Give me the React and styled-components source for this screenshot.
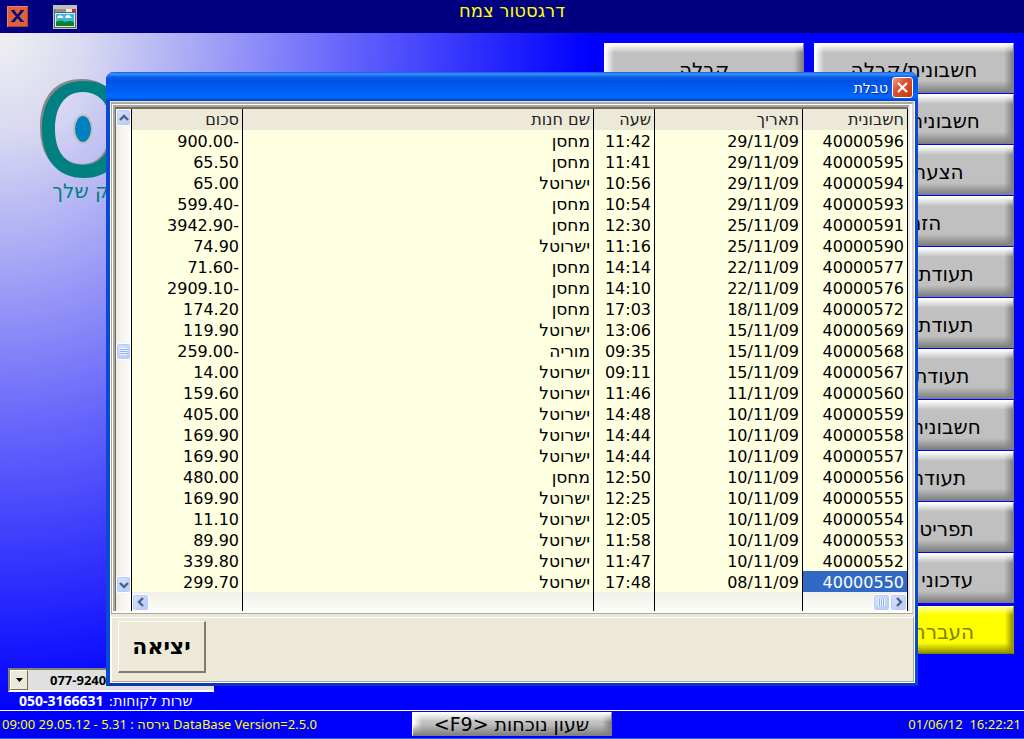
import React from 'react';
import styled, { createGlobalStyle, css } from 'styled-components';

const Global = createGlobalStyle`
  * { box-sizing: border-box; }
  html, body, #root { height: 100%; margin: 0; }
  body { background: #0000ff; }
  button, select, input { font-family: inherit; }
`;

const Desktop = styled.div`
  position: relative;
  min-height: 100%;
  display: flex;
  flex-direction: column;
  overflow: hidden;
  font-family: "DejaVu Sans", sans-serif;
  background: #0000ff;
`;

const TopBar = styled.header`
  display: grid;
  grid-template-columns: 1fr auto 1fr;
  height: 33px;
  background: #000080;
`;

const TopIcons = styled.div`
  display: flex;
  align-items: center;
  gap: 25px;
  padding-left: 7px;
`;

const IconButton = styled.button`
  display: block;
  padding: 0;
  border: 0;
  background: none;
  line-height: 0;
`;

const ShopName = styled.h1`
  margin: 0;
  font-size: 18px;
  font-weight: 400;
  line-height: 22px;
  color: #ffff00;
`;

const Main = styled.main`
  flex: 1;
  display: flex;
  justify-content: space-between;
  background: radial-gradient(ellipse 590px 680px at 0 0, #f0f0f0 0%, #d8d8f2 15%, #6666fb 58%, #0000ff 100%);
`;

const Side = styled.div`
  display: flex;
  flex-direction: column;
  justify-content: space-between;
  width: 260px;
  padding-top: 44px;
`;

const Brand = styled.div`
  padding-left: 38px;
`;

const Tagline = styled.p`
  margin: 0;
  width: 112px;
  font-size: 20px;
  line-height: 24px;
  color: #008080;
  white-space: nowrap;
`;

const Support = styled.div`
  display: flex;
  flex-direction: column;
  padding-left: 8px;
`;

const PhoneBox = styled.label`
  display: flex;
  width: 206px;
  height: 24px;
  border: solid;
  border-width: 2px 0 2px 2px;
  border-color: #808070 #fff #fff #808070;
  background: #e0e0e0;
`;

const PhoneSelect = styled.select`
  flex: 1;
  appearance: none;
  border: 0;
  padding: 0 0 0 22px;
  font-family: "Noto Sans", sans-serif;
  font-size: 13px;
  font-weight: 700;
  color: #000;
  background: #e0e0e0;
`;

const DropArrow = styled.span`
  display: grid;
  place-items: center;
  width: 18px;
  border: 1px solid;
  border-color: #fff #716f64 #716f64 #fff;
  background: #ece9d8;
`;

const Service = styled.p`
  display: flex;
  align-items: center;
  gap: 5px;
  height: 18px;
  margin: 0;
  padding-left: 11px;
  font-size: 14px;
  line-height: 18px;
  color: #fff;
  b { font-family: "Noto Sans", sans-serif; }
`;

const Menu = styled.nav`
  display: grid;
  grid-template-columns: 200px 200px;
  column-gap: 10px;
  row-gap: 1px;
  align-content: start;
  padding: 10px 10px 0 0;
`;

const bevel = css`
  border: 1px solid;
  border-color: #fff #808080 #808080 #fff;
  background:
    linear-gradient(to bottom, #ffffff 0, #c0c0c000 9px),
    linear-gradient(to top, #808080 0, #c0c0c000 11px),
    linear-gradient(to left, #808080 0, #c0c0c000 9px),
    linear-gradient(to right, #ffffff 0, #c0c0c000 9px),
    #c0c0c0;
`;

const MenuButton = styled.button`
  height: 50px;
  grid-column: ${(p) => p.$col || 2};
  padding: 3px 0 0;
  font-size: 20px;
  line-height: 24px;
  font-family: "DejaVu Sans", sans-serif;
  color: #000;
  white-space: nowrap;
  ${bevel}
  ${(p) => p.$hot && css`
    height: 48px;
    margin-top: 2px;
    color: #808000;
    border-color: #ffff90 #a0a000 #808000 #ffff90;
    background:
      linear-gradient(to bottom, #ffff90 0, #ffff0000 8px),
      linear-gradient(to top, #909000 0, #ffff0000 10px),
      linear-gradient(to left, #909000 0, #ffff0000 8px),
      #ffff00;
  `}
`;

const StatusBar = styled.footer`
  display: grid;
  grid-template-columns: 1fr auto 1fr;
  align-items: center;
  height: 29px;
  padding: 1px 3px 2px 2px;
  border-top: 1px solid #fff;
  border-bottom: 1px solid #2060d8;
  font-family: "Noto Sans", "DejaVu Sans", sans-serif;
  font-size: 13px;
  line-height: 18px;
  color: #ffff00;
`;

const Clock = styled.span`
  text-align: right;
`;

const ClockButton = styled.button`
  width: 200px;
  height: 24px;
  padding: 0;
  font-size: 19px;
  line-height: 22px;
  font-family: "DejaVu Sans", sans-serif;
  color: #000;
  ${bevel}
`;

const Dialog = styled.section`
  position: absolute;
  top: 72px;
  left: 106px;
  right: 106px;
  border: solid #0a48d8;
  border-width: 0 3px 3px 4px;
  border-bottom-color: #0838b8;
  border-radius: 8px 8px 0 0;
  background: #ece9d8;
  box-shadow: inset 0 0 0 1px #fff;
`;

const TitleBar = styled.div`
  display: flex;
  align-items: center;
  justify-content: flex-end;
  gap: 4px;
  height: 29px;
  margin: 0 -3px 0 -4px;
  padding: 2px 5px 0;
  border-radius: 8px 8px 0 0;
  background: linear-gradient(#0a5ce0 0, #3c94ff 2px, #0a5ce8 5px, #0053e0 9px, #0060f8 20px, #006aff 25px, #0040c8 29px);
`;

const Title = styled.h2`
  margin: 0;
  font-size: 14px;
  font-weight: 400;
  line-height: 20px;
  color: #fff;
  text-shadow: 1px 1px #0a2890;
`;

const CloseButton = styled.button`
  display: grid;
  place-items: center;
  width: 21px;
  height: 21px;
  padding: 0;
  border: 1px solid #fff;
  border-radius: 3px;
  background: linear-gradient(135deg, #f0a088, #e05030 40%, #c83808);
`;

const GridFrame = styled.div`
  display: flex;
  margin: 1px 1px 0;
  padding: 1px 2px 2px 1px;
  border: solid;
  border-width: 2px 2px 1px 1px;
  border-color: #aca899 #d8d4c4 #aca899 #aca899;
  background: #fff;
`;

const GridInner = styled.div`
  display: flex;
  flex: 1;
  min-width: 0;
  border: solid #aca899;
  border-width: 2px 0 0 2px;
  border-right: 2px solid #ece9d8;
`;

const VScroll = styled.div`
  display: flex;
  flex-direction: column;
  width: 16px;
  padding-bottom: 18px;
  border-left: 1px solid #716f64;
  border-top: 2px solid #716f64;
  background: linear-gradient(to right, #eeede5, #fefefb);
`;

const Gap = styled.span`
  flex: 1;
`;

const ScrollButton = styled.button`
  display: grid;
  place-items: center;
  flex: none;
  width: ${(p) => (p.$narrow ? 15 : 17)}px;
  height: 17px;
  padding: 0;
  border: 1px solid #fff;
  border-radius: 3px;
  background: linear-gradient(135deg, #d8e4fe, #b4c8f6);
  box-shadow: inset 0 0 0 1px #b8ccf8;
`;

const Sheet = styled.div`
  flex: 1;
  min-width: 0;
  border-top: 2px solid #716f64;
`;

const Table = styled.table`
  width: 100%;
  table-layout: fixed;
  border-collapse: separate;
  border-spacing: 0;
  border-right: 1px solid #000;
  direction: rtl;
  font-size: 16px;
  line-height: 19px;
`;

const Col = styled.col`
  width: ${(p) => (p.$w ? `${p.$w}px` : 'auto')};
`;

const Th = styled.th`
  height: 21px;
  padding: 0 3px 0 0;
  border-left: 1px solid #000;
  background: #ece9d8;
  font-size: 16px;
  font-weight: 400;
  text-align: right;
  color: #222;
`;

const Td = styled.td`
  height: 21px;
  padding: 2px 3px 0 0;
  border-left: 1px solid #000;
  background: ${(p) => (p.$selected ? '#316ac5' : '#ffffe1')};
  color: ${(p) => (p.$selected ? '#fff' : '#000')};
  font-size: ${(p) => (p.$name ? 17 : 16)}px;
  text-align: right;
  white-space: nowrap;
`;

const Ltr = styled.bdo`
  unicode-bidi: isolate;
`;

const TrackCell = styled.td`
  height: 19px;
  padding: 1px 0 0;
  border-left: 1px solid #000;
  background: linear-gradient(#f0efe8, #fdfdfa);
`;

const TrackEnd = styled.div`
  display: flex;
  direction: ltr;
  justify-content: ${(p) => p.$side};
`;

const Actions = styled.div`
  height: 65px;
  margin: 3px 1px 1px;
  padding: 3px 6px;
  border: 1px solid;
  border-color: #fff #aca899 #aca899 #fff;
`;

const ExitButton = styled.button`
  width: 88px;
  height: 52px;
  padding: 0;
  border: solid;
  border-width: 1px 2px 2px 1px;
  border-color: #fff #807d70 #807d70 #fff;
  background: #ece9d8;
  font-family: "DejaVu Sans", sans-serif;
  font-size: 22px;
  font-weight: 700;
  color: #000;
`;

const Chevron = ({ turn }) => (
  <svg width="10" height="10" viewBox="0 0 10 10" aria-hidden="true">
    <path d="M1 7 L5 3 L9 7" fill="none" stroke="#4d6185" strokeWidth="2.4" transform={`rotate(${turn} 5 5)`} />
  </svg>
);

const Grip = ({ turn }) => (
  <svg width="9" height="9" viewBox="0 0 9 9" aria-hidden="true">
    <g transform={`rotate(${turn} 4.5 4.5)`}>
      <path d="M1 1.500H8M1 3.500H8M1 5.500H8M1 7.500H8" stroke="#f2f6ff" />
      <path d="M1 2.500H8M1 4.500H8M1 6.500H8" stroke="#8cb0f8" />
    </g>
  </svg>
);

const rows = [
  ['40000596', '29/11/09', '11:42', 'מחסן', '900.00-'],
  ['40000595', '29/11/09', '11:41', 'מחסן', '65.50'],
  ['40000594', '29/11/09', '10:56', 'ישרוטל', '65.00'],
  ['40000593', '29/11/09', '10:54', 'מחסן', '599.40-'],
  ['40000591', '25/11/09', '12:30', 'מחסן', '3942.90-'],
  ['40000590', '25/11/09', '11:16', 'ישרוטל', '74.90'],
  ['40000577', '22/11/09', '14:14', 'מחסן', '71.60-'],
  ['40000576', '22/11/09', '14:10', 'מחסן', '2909.10-'],
  ['40000572', '18/11/09', '17:03', 'מחסן', '174.20'],
  ['40000569', '15/11/09', '13:06', 'ישרוטל', '119.90'],
  ['40000568', '15/11/09', '09:35', 'מוריה', '259.00-'],
  ['40000567', '15/11/09', '09:11', 'ישרוטל', '14.00'],
  ['40000560', '11/11/09', '11:46', 'ישרוטל', '159.60'],
  ['40000559', '10/11/09', '14:48', 'ישרוטל', '405.00'],
  ['40000558', '10/11/09', '14:44', 'ישרוטל', '169.90'],
  ['40000557', '10/11/09', '14:44', 'ישרוטל', '169.90'],
  ['40000556', '10/11/09', '12:50', 'מחסן', '480.00'],
  ['40000555', '10/11/09', '12:25', 'ישרוטל', '169.90'],
  ['40000554', '10/11/09', '12:05', 'ישרוטל', '11.10'],
  ['40000553', '10/11/09', '11:58', 'ישרוטל', '89.90'],
  ['40000552', '10/11/09', '11:47', 'ישרוטל', '339.80'],
  ['40000550', '08/11/09', '17:48', 'ישרוטל', '299.70'],
];

const menu = [
  'חשבונית מרכזת',
  'הצעת מחיר',
  'הזמנה',
  'תעודת משלוח',
  'תעודת החזרה',
  'תעודת כניסה',
  'חשבונית החזרה',
  'תעודת מלאי',
  'תפריט הנהלה',
  'עדכוני מחירים',
];

export default function App() {
  return (
    <Desktop>
      <Global />
      <TopBar>
        <TopIcons>
          <IconButton aria-label="סגור">
            <svg width="21" height="21" viewBox="0 0 21 21">
              <rect width="21" height="21" fill="#e0603c" />
              <path d="M0 0H21V1H1V21H0Z" fill="#f08060" />
              <path d="M20 1V20H1V21H21V1Z" fill="#b84028" />
              <path d="M4 4.500H8M13 4.500H17M4 15.500H8M13 15.500H17" stroke="#000080" />
              <path d="M5.500 4.500L15 15.500M15.500 4.500L6 15.500" fill="none" stroke="#000080" strokeWidth="2.6" />
            </svg>
          </IconButton>
          <IconButton aria-label="תמונה">
            <svg width="24" height="24" viewBox="0 0 24 24">
              <rect width="24" height="24" fill="#c0c0c0" />
              <rect x="1" y="4" width="22" height="19" fill="#606060" />
              <rect x="2" y="4" width="20" height="3" fill="#909090" />
              <rect x="13" y="4" width="6" height="3" fill="#f0f0f0" />
              <rect x="19" y="4" width="3" height="3" fill="#e02020" />
              <rect x="2" y="8" width="20" height="14" fill="#e8e8e8" />
              <rect x="3" y="9" width="18" height="12" fill="#38b8e8" />
              <path d="M4 13Q6 9 9 11Q11 12 10 13ZM12 12Q15 8 17 11L19 13H13Z" fill="#fff" />
              <path d="M3 17Q8 14 12 17Q17 15 21 17V21H3Z" fill="#108020" />
            </svg>
          </IconButton>
        </TopIcons>
        <ShopName dir="rtl">דרגסטור צמח</ShopName>
      </TopBar>

      <Main>
        <Side>
          <Brand>
            <svg width="90" height="102" viewBox="0 0 90 102" display="block" aria-hidden="true">
              <path fillRule="evenodd" fill="#888888" d="M44 2C71 2 84 22 84 50S71 98 44 98S2 80 2 50S17 2 44 2ZM44 13C25 13 16 29 16 50S25 87 44 87S72 71 72 50S63 13 44 13Z" />
              <path fillRule="evenodd" fill="#008080" d="M46 4C73 4 86 22 86 52S73 101 46 101S4 82 4 52S19 4 46 4ZM45 15C26 15 17 31 17 52S26 88 45 88S74 72 74 52S64 15 45 15Z" />
              <ellipse cx="45" cy="52" rx="9" ry="14" fill="#0080c0" stroke="#c0c0c0" strokeWidth="2" />
            </svg>
            <Tagline dir="rtl">המשק שלך</Tagline>
          </Brand>
          <Support>
            <PhoneBox>
              <DropArrow>
                <svg width="7" height="4" viewBox="0 0 7 4" aria-hidden="true"><path d="M0 0H7L3.500 4Z" fill="#000" /></svg>
              </DropArrow>
              <PhoneSelect aria-label="טלפון"><option>077-9240000</option></PhoneSelect>
            </PhoneBox>
            <Service><b>050-3166631</b><span dir="rtl">שרות לקוחות:</span></Service>
          </Support>
        </Side>
        <Menu>
          <MenuButton $col={1}>קבלה</MenuButton>
          <MenuButton>חשבונית/קבלה</MenuButton>
          {menu.map((m) => <MenuButton key={m}>{m}</MenuButton>)}
          <MenuButton $hot>העברת נתונים</MenuButton>
        </Menu>
      </Main>

      <StatusBar>
        <span>09:00 29.05.12 - 5.31 : <bdi>גירסה</bdi> DataBase Version=2.5.0</span>
        <ClockButton dir="rtl">שעון נוכחות <bdi dir="ltr">&lt;F9&gt;</bdi></ClockButton>
        <Clock>01/06/12&nbsp; 16:22:21</Clock>
      </StatusBar>

      <Dialog role="dialog" aria-labelledby="dialog-title">
        <TitleBar>
          <Title id="dialog-title">טבלת</Title>
          <CloseButton aria-label="סגירה">
            <svg width="13" height="13" viewBox="0 0 13 13"><path d="M2 2L11 11M11 2L2 11" stroke="#fff" strokeWidth="2.2" /></svg>
          </CloseButton>
        </TitleBar>
        <GridFrame>
          <GridInner>
            <VScroll>
              <ScrollButton $narrow aria-label="למעלה"><Chevron turn={0} /></ScrollButton>
              <Gap />
              <ScrollButton $narrow aria-label="גרירה"><Grip turn={0} /></ScrollButton>
              <Gap />
              <ScrollButton $narrow aria-label="למטה"><Chevron turn={180} /></ScrollButton>
            </VScroll>
            <Sheet>
              <Table>
                <colgroup>
                  <Col $w={105} /><Col $w={148} /><Col $w={61} /><Col /><Col $w={111} />
                </colgroup>
                <thead>
                  <tr><Th>חשבונית</Th><Th>תאריך</Th><Th>שעה</Th><Th>שם חנות</Th><Th>סכום</Th></tr>
                </thead>
                <tbody>
                  {rows.map((r, i) => (
                    <tr key={r[0]}>
                      {r.map((c, j) => (
                        <Td key={j} $name={j === 3} $selected={i === rows.length - 1 && j === 0}>
                          {j === 3 ? c : <Ltr dir="ltr">{c}</Ltr>}
                        </Td>
                      ))}
                    </tr>
                  ))}
                  <tr>
                    <TrackCell>
                      <TrackEnd $side="flex-end">
                        <ScrollButton aria-label="גרירה"><Grip turn={90} /></ScrollButton>
                        <ScrollButton aria-label="ימינה"><Chevron turn={90} /></ScrollButton>
                      </TrackEnd>
                    </TrackCell>
                    <TrackCell /><TrackCell /><TrackCell />
                    <TrackCell>
                      <TrackEnd $side="flex-start">
                        <ScrollButton aria-label="שמאלה"><Chevron turn={-90} /></ScrollButton>
                      </TrackEnd>
                    </TrackCell>
                  </tr>
                </tbody>
              </Table>
            </Sheet>
          </GridInner>
        </GridFrame>
        <Actions>
          <ExitButton>יציאה</ExitButton>
        </Actions>
      </Dialog>
    </Desktop>
  );
}
